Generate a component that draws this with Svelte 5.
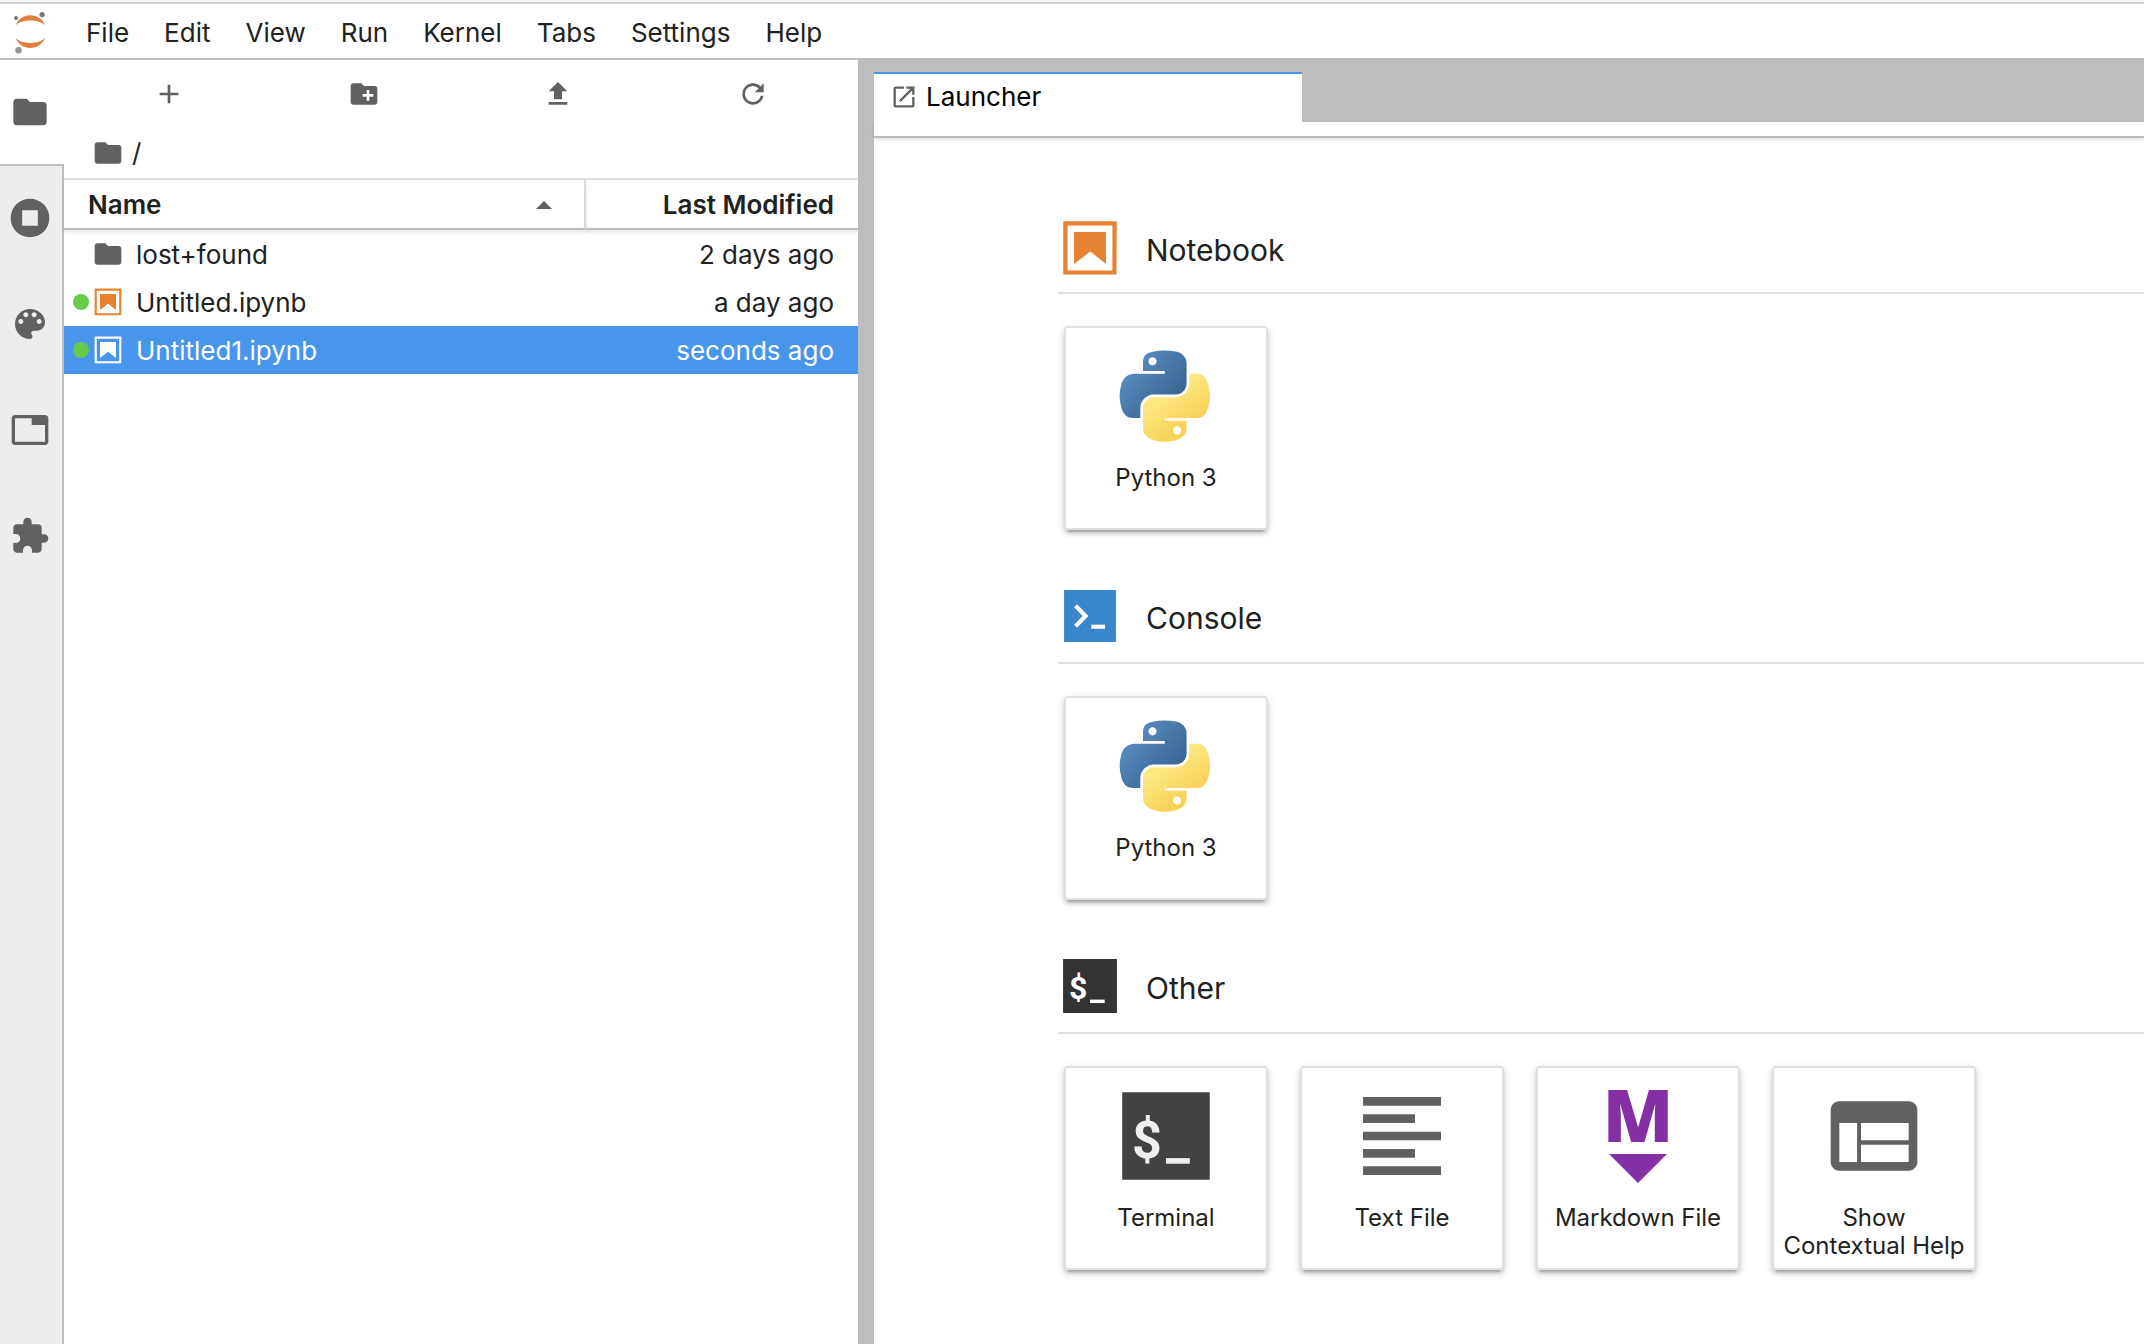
<script>
  const menus = ["File", "Edit", "View", "Run", "Kernel", "Tabs", "Settings", "Help"];

  const paths = {
    folder: "M10 4H4c-1.1 0-1.99.9-1.99 2L2 18c0 1.1.9 2 2 2h16c1.1 0 2-.9 2-2V8c0-1.1-.9-2-2-2h-8l-2-2z",
    palette:
      "M12 3c-4.97 0-9 4.03-9 9s4.03 9 9 9c.83 0 1.5-.67 1.5-1.5 0-.39-.15-.74-.39-1.01-.23-.26-.38-.61-.38-.99 0-.83.67-1.5 1.5-1.5H16c2.76 0 5-2.24 5-5 0-4.42-4.03-8-9-8zm-5.5 9c-.83 0-1.5-.67-1.5-1.5S5.67 9 6.5 9 8 9.67 8 10.5 7.33 12 6.5 12zm3-4C8.67 8 8 7.33 8 6.5S8.67 5 9.5 5s1.5.67 1.5 1.5S10.33 8 9.5 8zm5 0c-.83 0-1.5-.67-1.5-1.5S13.67 5 14.5 5s1.5.67 1.5 1.5S15.33 8 14.5 8zm3 4c-.83 0-1.5-.67-1.5-1.5S16.67 9 17.5 9s1.5.67 1.5 1.5-.67 1.5-1.5 1.5z",
    tabs: "M21 3H3c-1.1 0-2 .9-2 2v14c0 1.1.9 2 2 2h18c1.1 0 2-.9 2-2V5c0-1.1-.9-2-2-2zm0 16H3V5h10v4h8v10z",
    extension:
      "M20.5 11H19V7c0-1.1-.9-2-2-2h-4V3.5C13 2.12 11.88 1 10.5 1S8 2.12 8 3.5V5H4c-1.1 0-1.99.9-1.99 2v3.8H3.5c1.49 0 2.7 1.21 2.7 2.7s-1.21 2.7-2.7 2.7H2V20c0 1.1.9 2 2 2h3.8v-1.5c0-1.49 1.21-2.7 2.7-2.7 1.49 0 2.7 1.21 2.7 2.7V22H17c1.1 0 2-.9 2-2v-4h1.5c1.38 0 2.5-1.12 2.5-2.5S21.88 11 20.5 11z",
    running: "M12 .4a11.6 11.6 0 1 0 0 23.2A11.6 11.6 0 0 0 12 .4zM7.3 7.3h9.4v9.4H7.3z",
    add: "M19 13h-6v6h-2v-6H5v-2h6V5h2v6h6v2z",
    newFolder:
      "M20 6h-8l-2-2H4c-1.11 0-1.99.89-1.99 2L2 18c0 1.11.89 2 2 2h16c1.11 0 2-.89 2-2V8c0-1.11-.89-2-2-2zm-1 8h-3v3h-2v-3h-3v-2h3V9h2v3h3v2z",
    upload: "M9 16h6v-6h4l-7-7-7 7h4zM5 18h14v2H5z",
    refresh:
      "M12 18c-3.32 0-6-2.68-6-6s2.68-6 6-6c1.65 0 3.15.69 4.23 1.77L13.33 10.67H20V4l-2.35 2.35C16.2 4.9 14.21 4 12 4c-4.41 0-7.99 3.59-7.99 8S7.59 20 12 20c3.96 0 7.24-2.88 7.87-6.67h-2.03C17.23 16 14.85 18 12 18z",
    launcher:
      "M19 19H5V5h7V3H5a2 2 0 0 0-2 2v14a2 2 0 0 0 2 2h14c1.1 0 2-.9 2-2v-7h-2v7zM14 3v2h3.59l-9.83 9.83 1.41 1.41L19 6.41V10h2V3h-7z",
    text: "M15 15H3v2h12v-2zm0-8H3v2h12V7zM3 13h18v-2H3v2zm0 8h18v-2H3v2zM3 3v2h18V3H3z",
    inspector:
      "M20 4H4c-1.1 0-1.99.9-1.99 2L2 18c0 1.1.9 2 2 2h16c1.1 0 2-.9 2-2V6c0-1.1-.9-2-2-2zM8.1 18H4V9h4.1v9zM20 18H9v-4h11v4zm0-5H9V9h11v4z"
  };

  const sideTabs = [
    { icon: "folder", label: "File Browser" },
    { icon: "running", label: "Running Terminals and Kernels" },
    { icon: "palette", label: "Commands" },
    { icon: "tabs", label: "Open Tabs" },
    { icon: "extension", label: "Extension Manager" }
  ];

  const actions = [
    { icon: "add", label: "New Launcher" },
    { icon: "newFolder", label: "New Folder" },
    { icon: "upload", label: "Upload Files" },
    { icon: "refresh", label: "Refresh File List" }
  ];

  const files = [
    { name: "lost+found", modified: "2 days ago", type: "folder" },
    { name: "Untitled.ipynb", modified: "a day ago", type: "notebook", running: true },
    { name: "Untitled1.ipynb", modified: "seconds ago", type: "notebook", running: true }
  ];

  const sections = [
    { title: "Notebook", icon: "notebook", cards: [{ label: "Python 3", icon: "python" }] },
    { title: "Console", icon: "console", cards: [{ label: "Python 3", icon: "python" }] },
    {
      title: "Other",
      icon: "terminal",
      cards: [
        { label: "Terminal", icon: "terminal" },
        { label: "Text File", icon: "text" },
        { label: "Markdown File", icon: "markdown" },
        { label: "Show Contextual Help", icon: "inspector" }
      ]
    }
  ];

  let activeSide = $state("folder");
  let selected = $state("Untitled1.ipynb");
</script>

{#snippet icon(name)}
  {#if name === "notebook"}
    <svg class="icon icon--notebook" viewBox="0 0 22 22" aria-hidden="true">
      <path d="M18.7 3.3v15.4H3.3V3.3h15.4m1.5-1.5H1.8v18.3h18.3l.1-18.3z" />
      <path d="M16.5 16.5l-5.4-4.3-5.6 4.3v-11h11z" />
    </svg>
  {:else if name === "console"}
    <svg class="icon" viewBox="0 0 200 200" aria-hidden="true">
      <path fill="#3987ca" d="M19 19h162v162H19z" />
      <path fill="none" stroke="#fff" stroke-width="13" d="M55 68l31 32-31 32" />
      <path fill="#fff" d="M104 127h43v13h-43z" />
    </svg>
  {:else if name === "terminal"}
    <svg class="icon icon--terminal" viewBox="0 0 24 24" aria-hidden="true">
      <path class="terminal-bg" d="M1.9 1.9h20.2v20.2H1.9z" />
      <text class="terminal-fg" x="7.6" y="17" text-anchor="middle">$</text>
      <path class="terminal-fg" d="M12 17.1h5.5v1.3H12z" />
    </svg>
  {:else if name === "markdown"}
    <svg class="icon icon--markdown" viewBox="0 0 104 104" aria-hidden="true">
      <text x="52" y="58" text-anchor="middle">M</text>
      <path d="M23 70h58L52 99z" />
    </svg>
  {:else if name === "python"}
    <svg class="icon" viewBox="-7 -8 128 128" aria-hidden="true">
      <defs>
        <linearGradient id="py-blue" gradientUnits="userSpaceOnUse" x1="6" y1="12" x2="70" y2="66">
          <stop offset="0" stop-color="#5c92c6" />
          <stop offset="1" stop-color="#38638f" />
        </linearGradient>
        <linearGradient id="py-yellow" gradientUnits="userSpaceOnUse" x1="50" y1="58" x2="78" y2="98">
          <stop offset="0" stop-color="#fce883" />
          <stop offset="1" stop-color="#f8d155" />
        </linearGradient>
      </defs>
      <path
        fill="url(#py-blue)"
        d="M54.92 0C50.34.02 45.96.41 42.11 1.09 30.76 3.1 28.7 7.29 28.7 15.03v10.22h26.81v3.41H18.64c-7.79 0-14.62 4.68-16.75 13.59-2.46 10.21-2.57 16.59 0 27.25 1.91 7.94 6.46 13.59 14.25 13.59h9.22V70.84c0-8.85 7.66-16.66 16.75-16.66h26.78c7.45 0 13.41-6.14 13.41-13.62V15.03c0-7.27-6.13-12.72-13.41-13.94C64.28.33 59.5-.02 54.92 0zm-14.5 8.22c2.77 0 5.03 2.3 5.03 5.12 0 2.82-2.26 5.09-5.03 5.09-2.78 0-5.03-2.27-5.03-5.09 0-2.82 2.25-5.12 5.03-5.12z"
      />
      <path
        fill="url(#py-yellow)"
        d="M85.64 28.66v11.9c0 9.23-7.83 17-16.75 17H42.11c-7.34 0-13.41 6.28-13.41 13.63v25.53c0 7.26 6.32 11.54 13.41 13.62 8.48 2.5 16.62 2.95 26.78 0 6.75-1.95 13.41-5.89 13.41-13.62V86.5H55.51v-3.41H95.7c7.79 0 10.7-5.43 13.4-13.59 2.8-8.4 2.68-16.48 0-27.25-1.92-7.76-5.6-13.59-13.4-13.59zM70.58 93.31c2.77 0 5.03 2.28 5.03 5.1 0 2.82-2.26 5.12-5.03 5.12-2.77 0-5.04-2.3-5.04-5.12 0-2.82 2.27-5.1 5.04-5.1z"
      />
    </svg>
  {:else}
    <svg class="icon" viewBox="0 0 24 24" aria-hidden="true">
      <path fill-rule="evenodd" d={paths[name]} />
    </svg>
  {/if}
{/snippet}

<div class="lab">
  <header class="menubar">
    <svg class="logo" viewBox="0 0 62 54" role="img" aria-label="Jupyter">
      <g fill="#e57f3d">
        <path d="M15.5 21.5C18 15 23.7 11.3 30.3 11.3S42.6 15 45.2 21.5C42 18.2 36.5 16.5 30.3 16.5S18.6 18.2 15.5 21.5z" />
        <path d="M15.5 33.8C18 40.3 23.7 44 30.3 44S42.6 40.3 45.2 33.8C42 37.2 36.5 39 30.3 39S18.6 37.2 15.5 33.8z" />
      </g>
      <circle cx="42.1" cy="10.6" r="2.6" fill="#767677" />
      <circle cx="16" cy="14" r="2" fill="#767677" />
      <circle cx="18.5" cy="46.3" r="3.2" fill="#989798" />
    </svg>
    <nav class="menus">
      {#each menus as menu}
        <button class="menu">{menu}</button>
      {/each}
    </nav>
  </header>

  <div class="workspace">
    <nav class="sidebar">
      {#each sideTabs as tab}
        <button
          class="side-tab"
          class:active={activeSide === tab.icon}
          aria-label={tab.label}
          onclick={() => (activeSide = tab.icon)}
        >
          {@render icon(tab.icon)}
        </button>
      {/each}
      <div class="side-rest"></div>
    </nav>

    <section class="browser">
      <div class="actions">
        {#each actions as action}
          <button class="action" aria-label={action.label}>{@render icon(action.icon)}</button>
        {/each}
      </div>
      <div class="crumbs">
        {@render icon("folder")}
        <a href="#root">/</a>
      </div>
      <table class="listing">
        <thead>
          <tr>
            <th class="col-name">
              <div class="head-name">
                Name
                <svg class="caret" viewBox="0 0 16 8" aria-hidden="true"><path d="M0 8l8-8 8 8z" /></svg>
              </div>
            </th>
            <th class="col-modified">Last Modified</th>
          </tr>
        </thead>
        <tbody>
          {#each files as file}
            <tr class:selected={selected === file.name} onclick={() => (selected = file.name)}>
              <td>
                <div class="file">
                  <span class="dot" class:running={file.running}></span>
                  {@render icon(file.type)}
                  <span class="file-name">{file.name}</span>
                </div>
              </td>
              <td class="modified">{file.modified}</td>
            </tr>
          {/each}
        </tbody>
      </table>
    </section>

    <main class="dock">
      <div class="tabbar">
        <button class="tab">
          {@render icon("launcher")}
          Launcher
        </button>
      </div>
      <div class="tabbar-foot"></div>
      <div class="launcher">
        {#each sections as section}
          <section class="section">
            <div class="section-head">
              {@render icon(section.icon)}
              <h2>{section.title}</h2>
            </div>
            <div class="cards">
              {#each section.cards as card}
                <button class="card">
                  {@render icon(card.icon)}
                  <span class="card-label">{card.label}</span>
                </button>
              {/each}
            </div>
          </section>
        {/each}
      </div>
    </main>
  </div>
</div>

<style>
  :global(body) {
    margin: 0;
    background: #fff;
  }

  .lab {
    display: flex;
    flex-direction: column;
    box-sizing: border-box;
    min-height: 100vh;
    border-top: 2px solid #f5f5f5;
    font-family: Inter, "Liberation Sans", sans-serif;
    font-size: 26px;
    line-height: 32px;
    color: #212121;
  }

  button {
    margin: 0;
    padding: 0;
    border: 0;
    background: none;
    font: inherit;
    color: inherit;
    cursor: pointer;
  }

  .icon {
    display: block;
    flex: none;
    width: 32px;
    height: 32px;
    fill: #616161;
  }

  /* menu bar */
  .menubar {
    display: flex;
    height: 54px;
    border-top: 2px solid #d2d2d2;
    border-bottom: 2px solid #bdbdbd;
  }

  .logo {
    width: 62px;
    height: 54px;
  }

  .menus {
    display: flex;
    padding-left: 6px;
  }

  .menu {
    padding: 4px 17px 0 18px;
  }

  .workspace {
    display: flex;
    flex: 1;
  }

  /* left activity bar */
  .sidebar {
    display: flex;
    flex-direction: column;
    width: 64px;
  }

  .side-tab {
    display: flex;
    align-items: center;
    box-sizing: border-box;
    height: 106px;
    padding: 0 0 2px 10px;
    border-right: 2px solid #bdbdbd;
    background: #ededed;
  }

  .side-tab.active {
    padding-bottom: 0;
    border-right: 0;
    border-bottom: 2px solid #bdbdbd;
    background: #fff;
  }

  .side-tab .icon {
    width: 40px;
    height: 40px;
  }

  .side-rest {
    flex: 1;
    border-right: 2px solid #bdbdbd;
    background: #ededed;
  }

  /* file browser */
  .browser {
    width: 794px;
  }

  .actions {
    display: flex;
    height: 68px;
    padding: 0 8px;
  }

  .action {
    display: flex;
    flex: 1;
    align-items: center;
    justify-content: center;
  }

  .crumbs {
    display: flex;
    align-items: center;
    gap: 8px;
    height: 50px;
    padding: 0 28px;
  }

  .crumbs a {
    color: inherit;
    text-decoration: none;
  }

  .listing {
    width: 100%;
    table-layout: fixed;
    border-spacing: 0;
    border-top: 2px solid #e0e0e0;
  }

  th,
  td {
    box-sizing: border-box;
    height: 48px;
    padding: 2px 24px 0;
  }

  th {
    height: 50px;
    border-bottom: 2px solid #bdbdbd;
    box-shadow: 0 2px 4px rgba(0, 0, 0, 0.12);
    font-weight: 600;
  }

  .col-name {
    border-right: 2px solid #e0e0e0;
    text-align: left;
  }

  .col-modified {
    width: 272px;
    text-align: right;
  }

  .head-name {
    display: flex;
    align-items: center;
    justify-content: space-between;
  }

  .caret {
    width: 16px;
    height: 8px;
    margin-right: 8px;
    fill: #616161;
  }

  td:first-child {
    padding: 0 0 0 9px;
  }

  .file {
    display: flex;
    align-items: center;
  }

  .dot {
    width: 16px;
    height: 16px;
    margin-right: 3px;
    border-radius: 50%;
  }

  .dot.running {
    background: #67cb4d;
  }

  .file-name {
    padding: 2px 0 0 12px;
  }

  .modified {
    text-align: right;
  }

  .selected {
    background: #4796ec;
    color: #fff;
  }

  .icon--notebook {
    fill: #e68231;
  }

  .selected .icon--notebook {
    fill: #fff;
  }

  /* dock area */
  .dock {
    flex: 1;
    min-width: 0;
    border-left: 16px solid #bdbdbd;
  }

  .tabbar {
    display: flex;
    padding-top: 12px;
    background: #bdbdbd;
  }

  .tab {
    display: flex;
    align-items: center;
    gap: 8px;
    box-sizing: border-box;
    width: 428px;
    height: 50px;
    padding: 0 16px 2px;
    border-top: 2px solid #4796ec;
    background: #fff;
    color: #000;
  }

  .tab .icon {
    width: 28px;
    height: 28px;
  }

  .tabbar-foot {
    height: 14px;
    border-bottom: 2px solid #bdbdbd;
    box-shadow: 0 2px 4px rgba(0, 0, 0, 0.12);
  }

  .launcher {
    display: flex;
    flex-direction: column;
    gap: 54px;
    padding: 78px 0 74px 184px;
  }

  .section-head {
    display: flex;
    align-items: center;
    gap: 24px;
    padding-bottom: 14px;
    border-bottom: 2px solid #e0e0e0;
  }

  .section:first-child .section-head {
    padding-bottom: 12px;
  }

  .section-head .icon {
    width: 64px;
    height: 64px;
  }

  h2 {
    margin: 0;
    padding-top: 4px;
    font-size: 30px;
    font-weight: 400;
    line-height: 40px;
  }

  .cards {
    display: flex;
    flex-wrap: wrap;
    gap: 32px;
    padding: 32px 6px 0;
  }

  .card {
    display: flex;
    flex-direction: column;
    align-items: center;
    box-sizing: border-box;
    width: 204px;
    height: 204px;
    padding: 16px 6px 0;
    border: 2px solid #e0e0e0;
    border-radius: 4px;
    background: #fff;
    box-shadow:
      0 6px 2px -4px rgba(0, 0, 0, 0.2),
      0 4px 4px 0 rgba(0, 0, 0, 0.14),
      0 2px 10px 0 rgba(0, 0, 0, 0.12);
  }

  .card .icon {
    width: 104px;
    height: 104px;
  }

  .card-label {
    margin-top: 16px;
    font-size: 24px;
    line-height: 28px;
  }

  .icon--terminal text {
    font-family: Roboto, sans-serif;
    font-size: 12px;
    font-weight: 700;
  }

  .terminal-bg {
    fill: #333;
  }

  .terminal-fg {
    fill: #fff;
  }

  .card .terminal-bg {
    fill: #424242;
  }

  .card .terminal-fg {
    fill: #eee;
  }

  .icon--markdown {
    overflow: visible;
    fill: #8430a4;
  }

  .icon--markdown text {
    font-family: "Open Sans", "Noto Sans", sans-serif;
    font-size: 73px;
    font-weight: 800;
  }
</style>
